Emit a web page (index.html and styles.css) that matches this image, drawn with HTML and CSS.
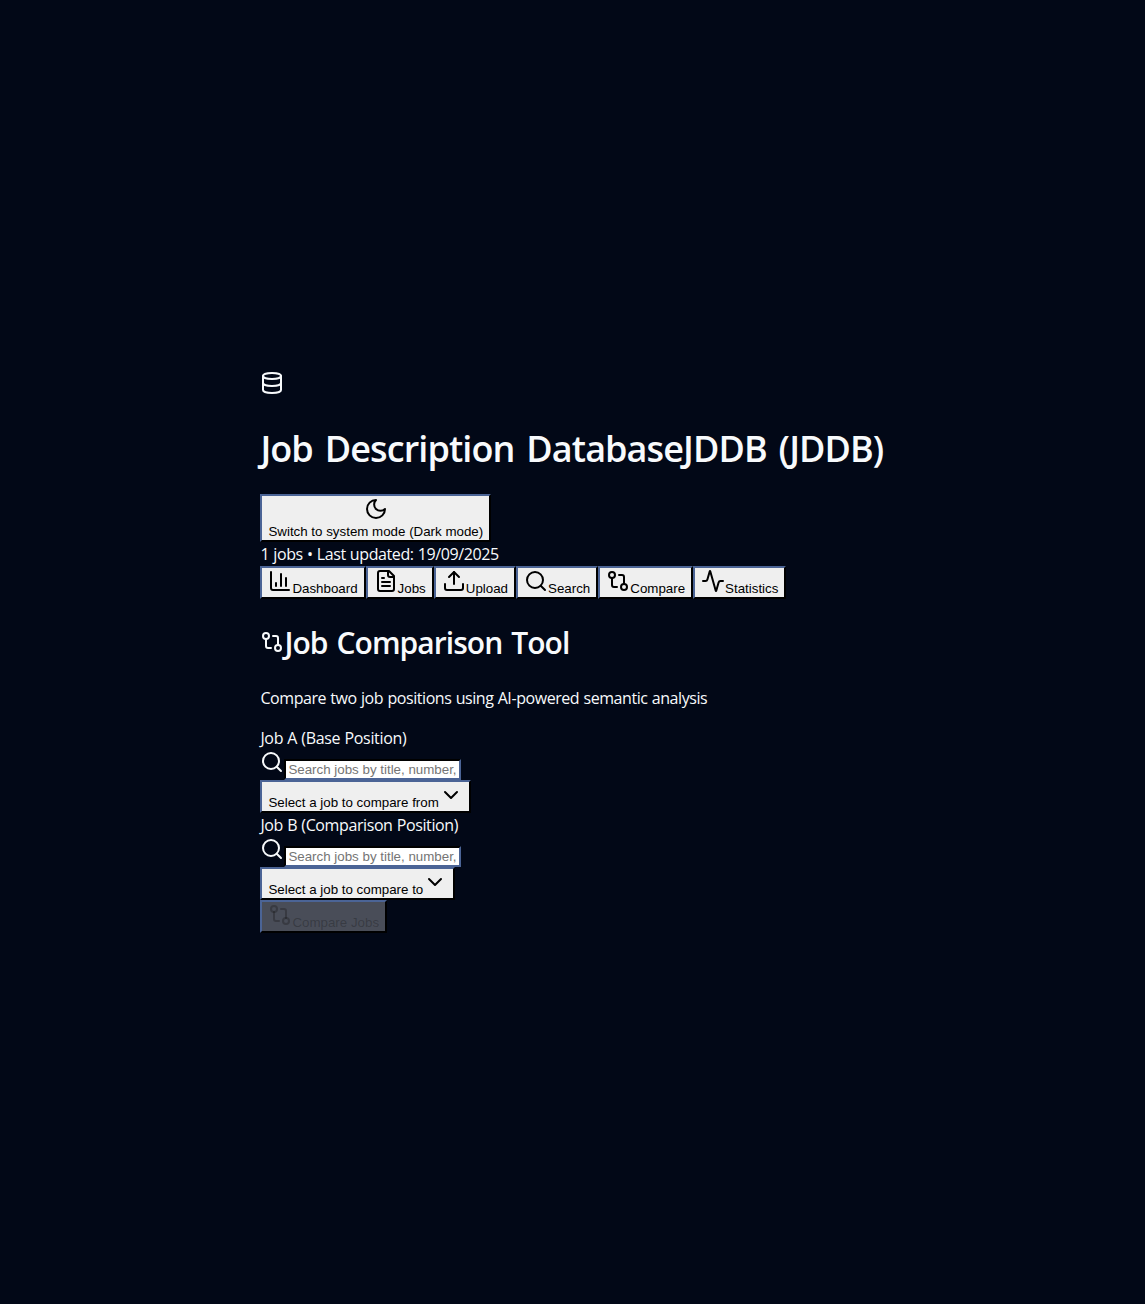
FILE: index.html
```html
<!DOCTYPE html>
<html lang="en">
<head>
<meta charset="utf-8">
<title>Job Description Database (JDDB)</title>
<link rel="stylesheet" href="styles.css">
</head>
<body>
<svg class="defs" width="0" height="0" aria-hidden="true">
  <symbol id="search" viewBox="0 0 24 24"><circle cx="11" cy="11" r="8"/><path d="m21 21-4.3-4.3"/></symbol>
  <symbol id="compare" viewBox="0 0 24 24"><circle cx="18" cy="18" r="3"/><circle cx="6" cy="6" r="3"/><path d="M13 6h3a2 2 0 0 1 2 2v7"/><path d="M11 18H8a2 2 0 0 1-2-2V9"/></symbol>
  <symbol id="chevron" viewBox="0 0 24 24"><path d="m6 9 6 6 6-6"/></symbol>
</svg>
<main class="app">
  <header>
    <div class="logo"><svg class="icon" viewBox="0 0 24 24"><ellipse cx="12" cy="5" rx="9" ry="3"/><path d="M3 5v14a9 3 0 0 0 18 0V5"/><path d="M3 12a9 3 0 0 0 18 0"/></svg></div>
    <h1 class="title"><span class="title-text">Job Description DatabaseJDDB (JDDB)</span></h1>
    <button class="btn theme"><svg class="icon" viewBox="0 0 24 24"><path d="M12 3a6 6 0 0 0 9 9 9 9 0 1 1-9-9Z"/></svg><span>Switch to system mode (Dark mode)</span></button>
    <div class="line"><span class="status-text">1 jobs • Last updated: 19/09/2025</span></div>
  </header>
  <nav class="nav">
    <button class="btn"><svg class="icon" viewBox="0 0 24 24"><path d="M3 3v16a2 2 0 0 0 2 2h16"/><path d="M18 17V9"/><path d="M13 17V5"/><path d="M8 17v-3"/></svg>Dashboard</button>
    <button class="btn"><svg class="icon" viewBox="0 0 24 24"><path d="M15 2H6a2 2 0 0 0-2 2v16a2 2 0 0 0 2 2h12a2 2 0 0 0 2-2V7Z"/><path d="M14 2v4a2 2 0 0 0 2 2h4"/><path d="M10 9H8"/><path d="M16 13H8"/><path d="M16 17H8"/></svg>Jobs</button>
    <button class="btn"><svg class="icon" viewBox="0 0 24 24"><path d="M21 15v4a2 2 0 0 1-2 2H5a2 2 0 0 1-2-2v-4"/><path d="m17 8-5-5-5 5"/><path d="M12 3v12"/></svg>Upload</button>
    <button class="btn"><svg class="icon"><use href="#search"/></svg>Search</button>
    <button class="btn"><svg class="icon"><use href="#compare"/></svg>Compare</button>
    <button class="btn"><svg class="icon" viewBox="0 0 24 24"><path d="M22 12h-2.48a2 2 0 0 0-1.93 1.46l-2.35 8.36a.25.25 0 0 1-.48 0L9.24 2.18a.25.25 0 0 0-.48 0l-2.35 8.36A2 2 0 0 1 4.49 12H2"/></svg>Statistics</button>
  </nav>
  <h2 class="subtitle"><svg class="icon"><use href="#compare"/></svg><span class="subtitle-text">Job Comparison Tool</span></h2>
  <p class="line intro"><span class="intro-text">Compare two job positions using AI-powered semantic analysis</span></p>
  <div class="line"><span class="job-a">Job A (Base Position)</span></div>
  <div class="field"><svg class="icon"><use href="#search"/></svg><input class="input" placeholder="Search jobs by title, number, or classification..."></div>
  <button class="btn">Select a job to compare from<svg class="icon"><use href="#chevron"/></svg></button>
  <div class="line"><span class="job-b">Job B (Comparison Position)</span></div>
  <div class="field"><svg class="icon"><use href="#search"/></svg><input class="input" placeholder="Search jobs by title, number, or classification..."></div>
  <button class="btn">Select a job to compare to<svg class="icon"><use href="#chevron"/></svg></button>
  <button class="btn" disabled><svg class="icon"><use href="#compare"/></svg>Compare Jobs</button>
</main>
</body>
</html>
```
FILE: styles.css
```css
body {
  margin: 0;
  min-height: 1304px;
  background: #020817;
  color: #f8fafc;
  font: 16px/24px "Open Sans", "Noto Sans", sans-serif;
}
.defs { position: absolute; }
.app { width: 624.2px; margin: 0 auto; padding-top: 371px; }
.icon {
  width: 24px;
  height: 24px;
  flex: none;
  fill: none;
  stroke: currentColor;
  stroke-width: 2;
  stroke-linecap: round;
  stroke-linejoin: round;
}
.logo { height: 30px; }
.title, .subtitle { margin: 0; font-weight: 600; white-space: nowrap; }
.title { height: 93px; font-size: 36px; line-height: 96px; }
.title-text { letter-spacing: -.9px; word-spacing: 3.4px; }
.subtitle { display: flex; height: 87px; font-size: 30px; line-height: 88px; }
.subtitle .icon { margin-top: 31px; }
.subtitle-text { letter-spacing: -.95px; word-spacing: 2.1px; }
.status-text { letter-spacing: -.4px; word-spacing: .4px; }
.intro-text { letter-spacing: -.43px; word-spacing: .5px; }
.job-a { letter-spacing: -.33px; word-spacing: .4px; }
.job-b { letter-spacing: -.4px; word-spacing: .5px; }
.line { height: 24px; margin: 0; white-space: nowrap; }
.intro { margin-bottom: 16px; }
.btn {
  display: flex;
  align-items: flex-end;
  box-sizing: border-box;
  height: 33px;
  margin: 0;
  padding: 1px 6px;
  border: 2px outset;
  border-color: #4b6496 #000 #000 #4b6496;
  border-radius: 0;
  background: #efefef;
  color: #000;
  font: 13.333px/15px "Liberation Sans", Arial, sans-serif;
  white-space: nowrap;
}
.btn .icon { align-self: flex-start; }
.btn:disabled { background: rgba(239, 239, 239, .3); color: rgba(16, 16, 16, .3); }
.theme { flex-direction: column; align-items: center; justify-content: space-between; height: 48px; }
.theme .icon { align-self: center; }
.nav { display: flex; }
.field { display: flex; height: 30px; align-items: flex-end; }
.field .icon { align-self: flex-start; }
.input {
  box-sizing: border-box;
  width: 177px;
  height: 21px;
  padding: 1px 2px;
  border: 2px solid;
  border-color: #000 #4b6496 #4b6496 #000;
  border-radius: 0;
  background: #fff;
  font: 13.333px "Liberation Sans", Arial, sans-serif;
}
```
